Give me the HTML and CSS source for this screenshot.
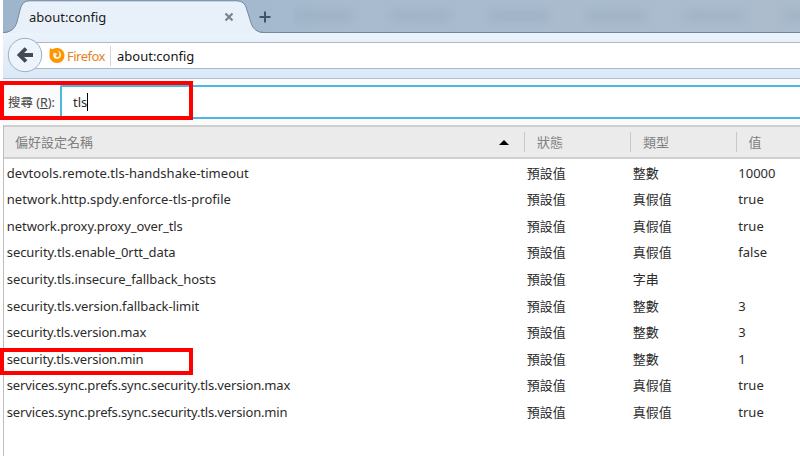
FILE: index.html
```html
<!DOCTYPE html>
<html lang="zh-Hant">
<head>
<meta charset="utf-8">
<title>about:config</title>
<link rel="stylesheet" href="styles.css">
</head>
<body>
<div class="window">
  <header class="tabs">
    <div class="glass"><i></i><i></i><i></i><i></i><i></i><i></i></div>
    <svg class="tab-shape" width="276" height="34" viewBox="0 0 276 34"><path d="M0 33C7 33 12 29 14 22L17 10Q19 1 26 1H234Q242 1 244 10L248 23Q251 32 260 33V34H0Z" fill="#e8f1fa"/><path d="M0 32.5C7 32.5 12 29 14 22L17 10Q19 .8 26 .8H234Q242 .8 244 10L248 23Q251 32.5 261 32.5H276" fill="none" stroke="#7489a1"/></svg>
    <span class="tab-title">about:config</span>
    <svg class="close" width="10" height="10" viewBox="0 0 10 10"><path d="M1.500 1.500l7 7m0-7l-7 7" stroke="#74808d" stroke-width="2.100"/></svg>
    <svg class="plus" width="12" height="12" viewBox="0 0 12 12"><path d="M6 .5v11M.5 6h11" stroke="#42566b" stroke-width="2"/></svg>
  </header>
  <div class="toolbar">
    <div class="url">
      <svg class="fox" width="16" height="17" viewBox="0 0 16 17"><path d="M1 1Q2.500 2.500 4 2C8.500-.6 15.500 2 15.500 8.500c0 4.400-3.300 7.500-7.500 7.500S.5 12.700.5 8.500C.5 5.500.7 4 1 1Z" fill="#ff9500"/><path d="M4.500 5.500L7.500 6.300 8 7.500 6.500 8.800 7.500 10C9.500 10.300 10.500 9 10.300 7.200 10.200 5.500 9.700 4.500 8.700 3.500 11.300 4.200 12.300 6.300 12 8.500 11.600 10.700 10 12 8 12 5.700 12 4.200 10.500 4.200 8.500Z" fill="#fff1dc"/></svg>
      <span class="brand">Firefox</span><span class="address">about:config</span>
    </div>
    <svg class="back" width="36" height="36" viewBox="0 0 36 36"><circle cx="18" cy="18" r="16.700" fill="#edf4fb" stroke="#9eafc0"/><path d="M19 11.500L12.500 18l6.500 6.500M13 18H26" fill="none" stroke="#414a55" stroke-width="3.800"/></svg>
  </div>
  <div class="search"><label>搜尋 (<u>R</u>):</label><div class="field"><span>tls</span><i class="caret"></i></div></div>
  <main class="table">
    <div class="row head"><b class="name">偏好設定名稱<i class="sort"></i></b><b>狀態</b><b>類型</b><b>值</b></div>
    <div class="rows">
      <div class="row"><span class="wide">devtools.remote.tls-handshake-timeout</span><span>預設值</span><span>整數</span><span>10000</span></div>
      <div class="row"><span class="wide">network.http.spdy.enforce-tls-profile</span><span>預設值</span><span>真假值</span><span>true</span></div>
      <div class="row"><span class="snug">network.proxy.proxy_over_tls</span><span>預設值</span><span>真假值</span><span>true</span></div>
      <div class="row"><span class="snug">security.tls.enable_0rtt_data</span><span>預設值</span><span>真假值</span><span>false</span></div>
      <div class="row"><span class="snug">security.tls.insecure_fallback_hosts</span><span>預設值</span><span>字串</span><span></span></div>
      <div class="row"><span class="snug">security.tls.version.fallback-limit</span><span>預設值</span><span>整數</span><span>3</span></div>
      <div class="row"><span class="tight">security.tls.version.max</span><span>預設值</span><span>整數</span><span>3</span></div>
      <div class="row"><span class="tight">security.tls.version.min</span><span>預設值</span><span>整數</span><span>1</span></div>
      <div class="row"><span class="tight">services.sync.prefs.sync.security.tls.version.max</span><span>預設值</span><span>真假值</span><span>true</span></div>
      <div class="row"><span class="tight">services.sync.prefs.sync.security.tls.version.min</span><span>預設值</span><span>真假值</span><span>true</span></div>
    </div>
  </main>
</div>
<div class="mark mark-search"></div>
<div class="mark mark-min"></div>
</body>
</html>
```
FILE: styles.css
```css
* { box-sizing: border-box; }
body { margin: 0; width: 800px; height: 456px; overflow: hidden; position: relative; background: #fff; color: #2c2c2c; font: 13px/20px "Noto Sans", "Noto Sans CJK TC", sans-serif; }
.window { margin-left: 3px; height: 456px; display: flex; flex-direction: column; }
.tabs { height: 33px; flex: none; position: relative; display: flex; align-items: center; background: linear-gradient(90deg, #9eb5cc, #a8bbcf 45%, #acbccd); border-bottom: 1px solid #71869e; }
.glass { position: absolute; inset: 0 0 0 290px; overflow: hidden; display: flex; align-items: center; gap: 38px; }
.glass i { width: 60px; height: 12px; flex: none; background: #90a5b9; opacity: .35; filter: blur(5px); }
.tab-shape { position: absolute; left: 0; top: 0; }
.tab-title { position: relative; width: 196px; padding-left: 26px; color: #1b1b1b; top: 1px; }
.close { position: relative; margin-left: 25px; top: 1px; }
.plus { position: relative; margin-left: 25px; top: 1px; }
.toolbar { height: 46px; flex: none; padding: 9px 0 0 22px; position: relative; background: linear-gradient(#ebf3fb, #dae8f7); border-bottom: 1px solid #aec1d2; }
.url { height: 27px; background: #fff; border: 1px solid #abb9c7; border-width: 1px 0; display: flex; align-items: center; padding-left: 24px; }
.fox { flex: none; }
.brand { color: #e58221; width: 44px; margin-left: 2px; letter-spacing: -.5px; border-right: 1px solid #d5d5d5; }
.address { margin-left: 6px; color: #151515; }
.back { position: absolute; left: 4px; top: 4px; }
.search { height: 46px; flex: none; padding: 6px 0 6px 5px; display: flex; background: #fbfbfb; }
.search label { width: 52px; font-size: 12.500px; line-height: 35px; color: #444; white-space: nowrap; }
.field { flex: 1; border: 2px solid #4db6e2; border-right: 0; border-radius: 2px 0 0 2px; background: #fff; display: flex; align-items: center; padding-left: 11px; }
.caret { width: 1px; height: 18px; background: #000; }
.table { flex: 1; border-left: 1px solid #bdbdbd; }
.row { display: grid; grid-template-columns: 520px 106px 105.500px 1fr; height: 26.600px; align-items: center; white-space: nowrap; }
.row span { padding-left: 2.800px; }
.row .wide { letter-spacing: .025px; }
.row .snug { letter-spacing: -.075px; }
.row .tight { letter-spacing: -.16px; }
.head { height: 34px; background: #ebebeb; border: solid #cfcfcf; border-width: 2px 0; color: #808080; }
.head b { font-weight: 400; line-height: 20px; padding-left: 12px; border-left: 1px solid #c8c8c8; }
.head .name { border: 0; padding: 0 15px 0 11px; display: flex; justify-content: space-between; align-items: center; }
.sort { border: 5px solid transparent; border-top: 0; border-bottom: 5px solid #000; }
.rows { padding-top: .4px; }
.mark { position: absolute; left: 0; width: 193px; border: 4px solid #f00; }
.mark-search { top: 81px; height: 39px; }
.mark-min { top: 348px; height: 27px; }
```
